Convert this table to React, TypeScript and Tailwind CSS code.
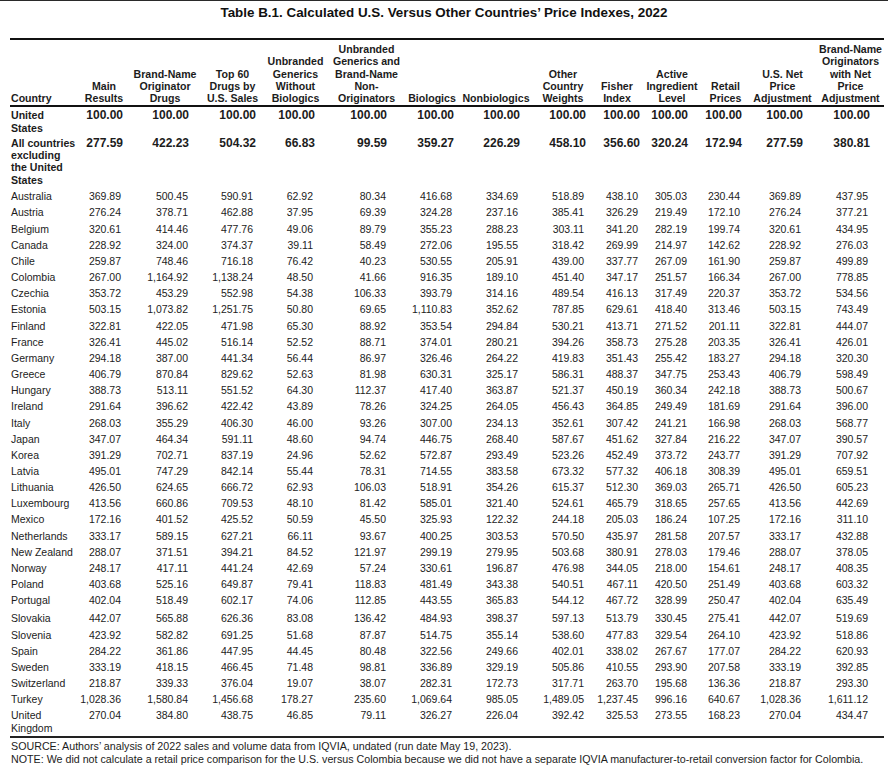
import React from "react";

const widths = [
  "w-[70px]", "w-[48px]", "w-[74px]", "w-[61px]", "w-[65px]", "w-[77px]", "w-[54px]",
  "w-[74px]", "w-[60px]", "w-[48px]", "w-[62px]", "w-[45px]", "w-[69px]", "w-[67px]",
];

const prReg = [
  "pr-[7px]", "pr-[14px]", "pr-[10px]", "pr-[15px]", "pr-[19px]", "pr-[7px]", "pr-[15px]",
  "pr-[9px]", "pr-[3px]", "pr-[16px]", "pr-[8px]", "pr-[16px]", "pr-[16px]",
];
const prBold = [
  "pr-[5px]", "pr-[13px]", "pr-[7px]", "pr-[13px]", "pr-[18px]", "pr-[5px]", "pr-[13px]",
  "pr-[7px]", "pr-[1px]", "pr-[15px]", "pr-[6px]", "pr-[14px]", "pr-[14px]",
];

const headers: string[][] = [
  ["Main", "Results"],
  ["Brand-Name", "Originator", "Drugs"],
  ["Top 60", "Drugs by", "U.S. Sales"],
  ["Unbranded", "Generics", "Without", "Biologics"],
  ["Unbranded", "Generics and", "Brand-Name", "Non-", "Originators"],
  ["Biologics"],
  ["Nonbiologics"],
  ["Other", "Country", "Weights"],
  ["Fisher", "Index"],
  ["Active", "Ingredient", "Level"],
  ["Retail", "Prices"],
  ["U.S. Net", "Price", "Adjustment"],
  ["Brand-Name", "Originators", "with Net", "Price", "Adjustment"],
];

const raw = `Australia|369.89 500.45 590.91 62.92 80.34 416.68 334.69 518.89 438.10 305.03 230.44 369.89 437.95
Austria|276.24 378.71 462.88 37.95 69.39 324.28 237.16 385.41 326.29 219.49 172.10 276.24 377.21
Belgium|320.61 414.46 477.76 49.06 89.79 355.23 288.23 303.11 341.20 282.19 199.74 320.61 434.95
Canada|228.92 324.00 374.37 39.11 58.49 272.06 195.55 318.42 269.99 214.97 142.62 228.92 276.03
Chile|259.87 748.46 716.18 76.42 40.23 530.55 205.91 439.00 337.77 267.09 161.90 259.87 499.89
Colombia|267.00 1,164.92 1,138.24 48.50 41.66 916.35 189.10 451.40 347.17 251.57 166.34 267.00 778.85
Czechia|353.72 453.29 552.98 54.38 106.33 393.79 314.16 489.54 416.13 317.49 220.37 353.72 534.56
Estonia|503.15 1,073.82 1,251.75 50.80 69.65 1,110.83 352.62 787.85 629.61 418.40 313.46 503.15 743.49
Finland|322.81 422.05 471.98 65.30 88.92 353.54 294.84 530.21 413.71 271.52 201.11 322.81 444.07
France|326.41 445.02 516.14 52.52 88.71 374.01 280.21 394.26 358.73 275.28 203.35 326.41 426.01
Germany|294.18 387.00 441.34 56.44 86.97 326.46 264.22 419.83 351.43 255.42 183.27 294.18 320.30
Greece|406.79 870.84 829.62 52.63 81.98 630.31 325.17 586.31 488.37 347.75 253.43 406.79 598.49
Hungary|388.73 513.11 551.52 64.30 112.37 417.40 363.87 521.37 450.19 360.34 242.18 388.73 500.67
Ireland|291.64 396.62 422.42 43.89 78.26 324.25 264.05 456.43 364.85 249.49 181.69 291.64 396.00
Italy|268.03 355.29 406.30 46.00 93.26 307.00 234.13 352.61 307.42 241.21 166.98 268.03 568.77
Japan|347.07 464.34 591.11 48.60 94.74 446.75 268.40 587.67 451.62 327.84 216.22 347.07 390.57
Korea|391.29 702.71 837.19 24.96 52.62 572.87 293.49 523.26 452.49 373.72 243.77 391.29 707.92
Latvia|495.01 747.29 842.14 55.44 78.31 714.55 383.58 673.32 577.32 406.18 308.39 495.01 659.51
Lithuania|426.50 624.65 666.72 62.93 106.03 518.91 354.26 615.37 512.30 369.03 265.71 426.50 605.23
Luxembourg|413.56 660.86 709.53 48.10 81.42 585.01 321.40 524.61 465.79 318.65 257.65 413.56 442.69
Mexico|172.16 401.52 425.52 50.59 45.50 325.93 122.32 244.18 205.03 186.24 107.25 172.16 311.10
Netherlands|333.17 589.15 627.21 66.11 93.67 400.25 303.53 570.50 435.97 281.58 207.57 333.17 432.88
New Zealand|288.07 371.51 394.21 84.52 121.97 299.19 279.95 503.68 380.91 278.03 179.46 288.07 378.05
Norway|248.17 417.11 441.24 42.69 57.24 330.61 196.87 476.98 344.05 218.00 154.61 248.17 408.35
Poland|403.68 525.16 649.87 79.41 118.83 481.49 343.38 540.51 467.11 420.50 251.49 403.68 603.32
Portugal|402.04 518.49 602.17 74.06 112.85 443.55 365.83 544.12 467.72 328.99 250.47 402.04 635.49
Slovakia|442.07 565.88 626.36 83.08 136.42 484.93 398.37 597.13 513.79 330.45 275.41 442.07 519.69
Slovenia|423.92 582.82 691.25 51.68 87.87 514.75 355.14 538.60 477.83 329.54 264.10 423.92 518.86
Spain|284.22 361.86 447.95 44.45 80.48 322.56 249.66 402.01 338.02 267.67 177.07 284.22 620.93
Sweden|333.19 418.15 466.45 71.48 98.81 336.89 329.19 505.86 410.55 293.90 207.58 333.19 392.85
Switzerland|218.87 339.33 376.04 19.07 38.07 282.31 172.73 317.71 263.70 195.68 136.36 218.87 293.30
Turkey|1,028.36 1,580.84 1,456.68 178.27 235.60 1,069.64 985.05 1,489.05 1,237.45 996.16 640.67 1,028.36 1,611.12
United/Kingdom|270.04 384.80 438.75 46.85 79.11 326.27 226.04 392.42 325.53 273.55 168.23 270.04 434.47`;

const rows = raw.split("\n").map((line) => {
  const [name, vals] = line.split("|");
  return { name: name.split("/"), vals: vals.split(" ") };
});

const boldRows = [
  { name: ["United", "States"], vals: Array(13).fill("100.00") },
  {
    name: ["All countries", "excluding", "the United", "States"],
    vals: "277.59 422.23 504.32 66.83 99.59 359.27 226.29 458.10 356.60 320.24 172.94 277.59 380.81".split(" "),
  },
];

function Lines({ lines }: { lines: string[] }) {
  return (
    <>
      {lines.map((l, i) => (
        <React.Fragment key={i}>
          {i > 0 && <br />}
          {l}
        </React.Fragment>
      ))}
    </>
  );
}

export default function App() {
  return (
    <div
      className="w-[888px] h-[779px] bg-white border-t border-[#2a2a2a] text-[#1c1c1c] overflow-hidden"
      style={{ fontFamily: '"Liberation Sans", Arial, sans-serif' }}
    >
      <div className="pt-[4px] h-[37px] text-center font-bold text-[13.4px] leading-[16px] text-[#111]">
        Table B.1. Calculated U.S. Versus Other Countries’ Price Indexes, 2022
      </div>
      <table className="ml-[10px] w-[874px] table-fixed border-collapse">
        <colgroup>
          {widths.map((w, i) => (
            <col key={i} className={w} />
          ))}
        </colgroup>
        <thead>
          <tr className="border-t-2 border-b-2 border-[#111]">
            <th className="align-bottom text-left pl-[1px] pt-[3px] pb-[1px] font-bold text-[10.6px] leading-[12.25px] whitespace-nowrap">
              Country
            </th>
            {headers.map((h, i) => (
              <th
                key={i}
                className="align-bottom text-center pt-[3px] pb-[1px] px-0 font-bold text-[10.6px] leading-[12.25px] whitespace-nowrap"
              >
                <Lines lines={h} />
              </th>
            ))}
          </tr>
        </thead>
        <tbody>
          {boldRows.map((r, ri) => (
            <tr key={ri}>
              <td
                className={`align-top text-left pl-[1px] font-bold text-[10.6px] leading-[12.3px] whitespace-nowrap ${
                  ri === 0 ? "pt-[2px] pb-[1.5px]" : "pt-[1.5px] pb-[2.5px]"
                }`}
              >
                <Lines lines={r.name} />
              </td>
              {r.vals.map((v, i) => (
                <td
                  key={i}
                  className={`align-top text-right font-bold text-[12px] leading-[12.3px] whitespace-nowrap ${prBold[i]} ${
                    ri === 0 ? "pt-[2px] pb-[1.5px]" : "pt-[1.5px] pb-[2.5px]"
                  }`}
                >
                  {v}
                </td>
              ))}
            </tr>
          ))}
          {rows.map((r, ri) => {
            const last = ri === rows.length - 1;
            const pad = r.name[0] === "Slovakia" ? "pt-[3.8px] pb-[1.8px]" : "pt-[1.8px] pb-[1.8px]";
            return (
              <tr key={ri} className={last ? "border-b-2 border-[#222]" : ""}>
                <td className={`align-top text-left pl-[1px] text-[10.5px] leading-[12.56px] whitespace-nowrap ${pad}`}>
                  <Lines lines={r.name} />
                </td>
                {r.vals.map((v, i) => (
                  <td
                    key={i}
                    className={`align-top text-right text-[10.5px] leading-[12.56px] whitespace-nowrap ${prReg[i]} ${pad}`}
                  >
                    {v}
                  </td>
                ))}
              </tr>
            );
          })}
        </tbody>
      </table>
      <div className="ml-[11px] pt-[1.5px] text-[10.7px] leading-[13px] whitespace-nowrap">
        <div>SOURCE: Authors’ analysis of 2022 sales and volume data from IQVIA, undated (run date May 19, 2023).</div>
        <div>
          NOTE: We did not calculate a retail price comparison for the U.S. versus Colombia because we did not have a
          separate IQVIA manufacturer-to-retail conversion factor for Colombia.
        </div>
      </div>
    </div>
  );
}
